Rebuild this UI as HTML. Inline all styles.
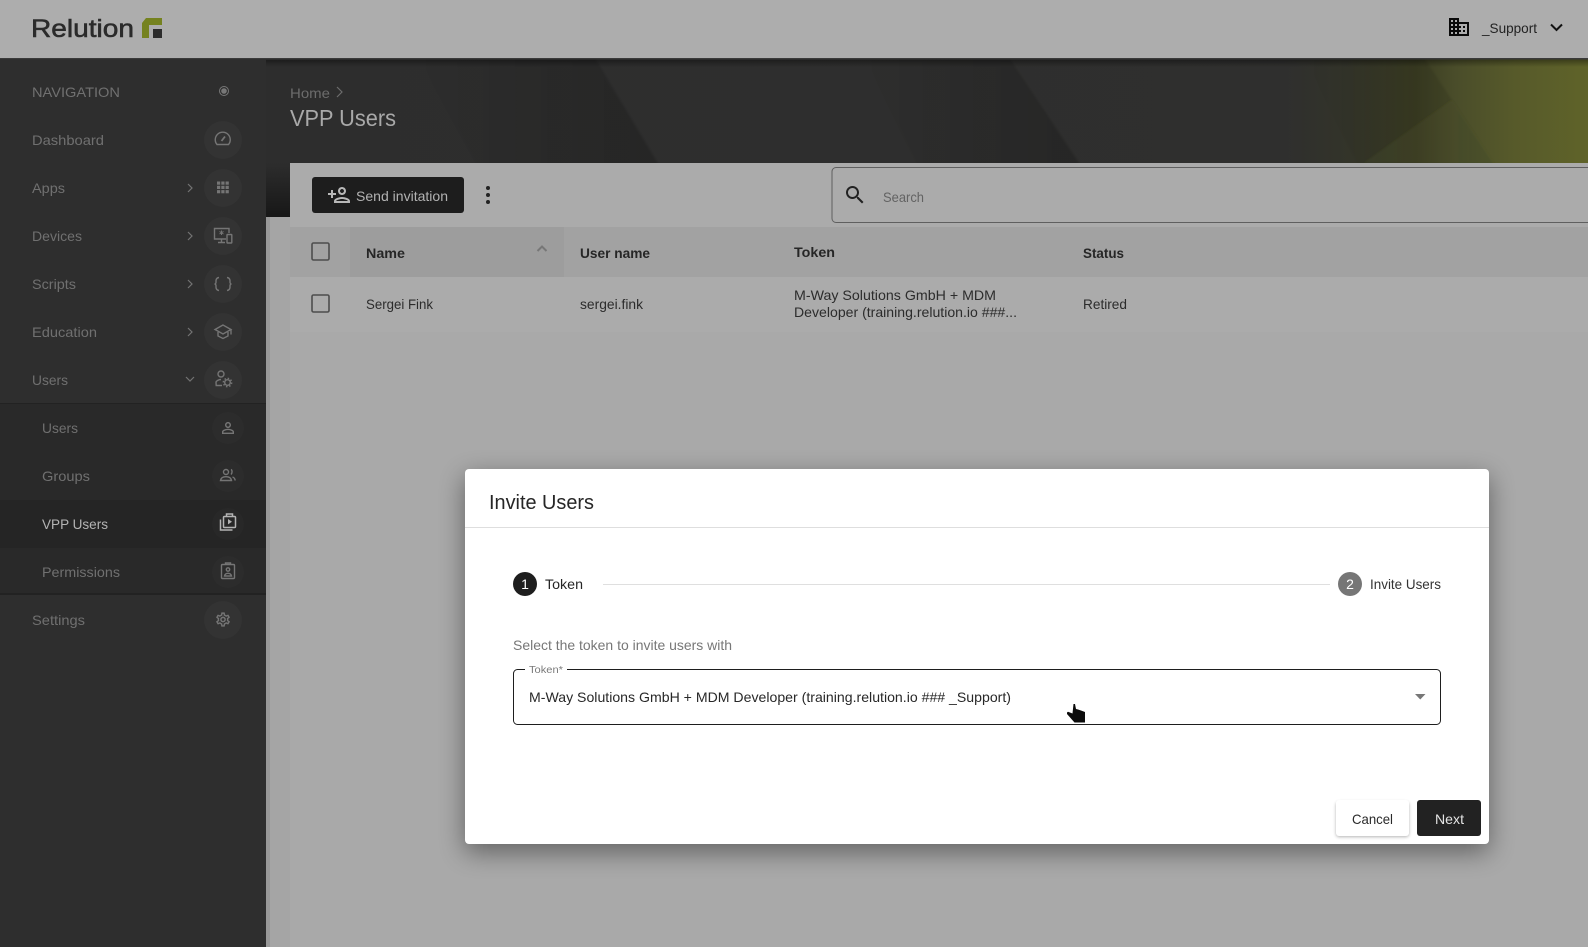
<!DOCTYPE html>
<html lang="en"><head><meta charset="utf-8"><title>VPP Users</title>
<style>
html,body{margin:0;padding:0;width:1588px;height:947px;overflow:hidden;background:#a9a9a9}
svg{display:block;position:absolute;left:0;top:0}
text{font-family:"Liberation Sans",sans-serif;font-size:14px}
.n{fill:#707070}
.s{fill:none;stroke:#757575;stroke-width:1.4}
.ic{fill:#757575}
.h{font-weight:bold;fill:#262626}
.d{fill:#2c2c2c}
</style></head><body>
<svg width="1588" height="947" viewBox="0 0 1588 947" xmlns="http://www.w3.org/2000/svg">
<defs>
<linearGradient id="bg" gradientUnits="userSpaceOnUse" x1="266" x2="1588" y1="0" y2="0">
<stop offset="0" stop-color="#2d2d2d"/><stop offset=".77" stop-color="#2f2f2e"/><stop offset=".82" stop-color="#333429"/><stop offset=".87" stop-color="#3a3c22"/><stop offset=".9" stop-color="#4a4d2a"/><stop offset=".945" stop-color="#575a2a"/><stop offset="1" stop-color="#5f6329"/>
</linearGradient>
<linearGradient id="w1" gradientUnits="userSpaceOnUse" x1="413" x2="640" y1="0" y2="0">
<stop offset="0" stop-color="#000" stop-opacity="0"/><stop offset="1" stop-color="#000" stop-opacity=".17"/>
</linearGradient>
<linearGradient id="w2" gradientUnits="userSpaceOnUse" x1="860" x2="1060" y1="0" y2="0">
<stop offset="0" stop-color="#000" stop-opacity="0"/><stop offset="1" stop-color="#000" stop-opacity=".17"/>
</linearGradient>
<linearGradient id="w3" gradientUnits="userSpaceOnUse" x1="1300" x2="1470" y1="0" y2="0">
<stop offset="0" stop-color="#000" stop-opacity="0"/><stop offset="1" stop-color="#000" stop-opacity=".12"/>
</linearGradient>
<linearGradient id="tp" x1="0" x2="0" y1="0" y2="1">
<stop offset="0" stop-color="#000" stop-opacity=".4"/><stop offset="1" stop-color="#000" stop-opacity="0"/>
</linearGradient>
<linearGradient id="st" x1="0" x2="0" y1="0" y2="1">
<stop offset="0" stop-color="#2d2d2d"/><stop offset="1" stop-color="#171717"/>
</linearGradient>
<filter id="sh" x="-10%" y="-20%" width="120%" height="140%"><feGaussianBlur stdDeviation="13"/></filter>
<filter id="sb" x="-20%" y="-40%" width="140%" height="180%"><feGaussianBlur stdDeviation="1.5"/></filter>
<filter id="wb" x="-5%" y="-5%" width="110%" height="110%"><feGaussianBlur stdDeviation="1"/></filter>
<clipPath id="bc"><rect x="266" y="59" width="1322" height="104"/></clipPath>
</defs>

<!-- page -->
<rect width="1588" height="947" fill="#a8a8a8"/>

<!-- banner -->
<rect x="266" y="59" width="1322" height="104" fill="url(#bg)"/>
<g clip-path="url(#bc)" filter="url(#wb)">
<polygon points="413,50 590,50 662,170 480,170" fill="url(#w1)"/>
<polygon points="860,50 1004,50 1084,170 920,170" fill="url(#w2)"/>
<polygon points="1300,50 1419,50 1498,170 1360,170" fill="url(#w3)"/>
<polygon points="1364,163 1452,100 1494,163" fill="#6d702f" opacity=".12"/>
</g>
<rect x="266" y="59" width="1322" height="8" fill="url(#tp)"/>
<rect x="266" y="163" width="24" height="54" fill="url(#st)"/>

<!-- panel -->
<rect x="290" y="163" width="1298" height="784" fill="#ababab"/>
<rect x="290" y="227" width="1298" height="50" fill="#a2a2a2"/>
<rect x="350" y="227" width="214" height="50" fill="#9d9d9d"/>
<rect x="290" y="277" width="1298" height="55" fill="#ababab"/>
<rect x="289" y="332" width="1299" height="615" fill="#a9a9a9"/>
<rect x="266" y="217" width="24" height="730" fill="#a5a5a5"/>
<rect x="266" y="217" width="4" height="730" fill="#000" opacity=".08"/>

<text x="290" y="98" fill="#6c6c6c" textLength="40" lengthAdjust="spacingAndGlyphs">Home</text>
<path d="M337 87l5 5-5 5" fill="none" stroke="#6c6c6c" stroke-width="1.2"/>
<text x="290" y="126" fill="#a9a9a9" style="font-size:23px" textLength="106" lengthAdjust="spacingAndGlyphs">VPP Users</text>

<!-- toolbar -->
<rect x="312" y="177" width="152" height="36" rx="3" fill="#1d1d1d"/>
<g transform="translate(327,183) scale(1)" fill="#b8b8b8"><path d="M15 12c2.21 0 4-1.79 4-4s-1.79-4-4-4-4 1.79-4 4 1.79 4 4 4zm0-6c1.1 0 2 .9 2 2s-.9 2-2 2-2-.9-2-2 .9-2 2-2zm0 8c-2.67 0-8 1.34-8 4v2h16v-2c0-2.66-5.33-4-8-4zm-6 4c.22-.72 3.31-2 6-2 2.7 0 5.8 1.29 6 2H9zm-3-3v-3h3v-2H6V7H4v3H1v2h3v3z"/></g>
<text x="356" y="201" fill="#b2b2b2" textLength="92" lengthAdjust="spacingAndGlyphs">Send invitation</text>
<circle cx="488" cy="188" r="2" fill="#222"/><circle cx="488" cy="195" r="2" fill="#222"/><circle cx="488" cy="202" r="2" fill="#222"/>
<path d="M1588 167.500H836a4 4 0 0 0-4 4v47a4 4 0 0 0 4 4H1588" fill="none" stroke="#5f5f5f" stroke-width="1"/>
<g transform="translate(843,183)" fill="#222"><path d="M15.500 14h-.79l-.28-.27C15.410 12.590 16 11.110 16 9.500 16 5.910 13.090 3 9.500 3S3 5.910 3 9.500 5.910 16 9.500 16c1.610 0 3.090-.59 4.230-1.570l.27.28v.79l5 4.990L20.490 19l-4.990-5zm-6 0C7.010 14 5 11.990 5 9.500S7.010 5 9.500 5 14 7.010 14 9.500 11.990 14 9.500 14z"/></g>
<text x="883" y="202" fill="#636363" textLength="41" lengthAdjust="spacingAndGlyphs">Search</text>

<!-- table -->
<rect x="312" y="243" width="17" height="17" rx="1.500" fill="none" stroke="#4d4d4d" stroke-width="1.600"/>
<rect x="312" y="295" width="17" height="17" rx="1.500" fill="none" stroke="#4d4d4d" stroke-width="1.600"/>
<text x="366" y="258" class="h" textLength="39" lengthAdjust="spacingAndGlyphs">Name</text>
<path d="M537.500 251l4.500-4.500 4.500 4.500" fill="none" stroke="#777" stroke-width="2"/>
<text x="580" y="258" class="h" textLength="70" lengthAdjust="spacingAndGlyphs">User name</text>
<text x="794" y="257" class="h" textLength="41" lengthAdjust="spacingAndGlyphs">Token</text>
<text x="1083" y="258" class="h" textLength="41" lengthAdjust="spacingAndGlyphs">Status</text>
<text x="366" y="309" class="d" textLength="67" lengthAdjust="spacingAndGlyphs">Sergei Fink</text>
<text x="580" y="309" class="d" textLength="63" lengthAdjust="spacingAndGlyphs">sergei.fink</text>
<text x="794" y="300" class="d" textLength="202" lengthAdjust="spacingAndGlyphs">M-Way Solutions GmbH + MDM</text>
<text x="794" y="317" class="d" textLength="223" lengthAdjust="spacingAndGlyphs">Developer (training.relution.io ###...</text>
<text x="1083" y="309" class="d" textLength="44" lengthAdjust="spacingAndGlyphs">Retired</text>

<!-- header -->
<rect width="1588" height="59" fill="#adadad"/>
<rect y="58" width="1588" height="1.500" fill="#3a3a3a"/>
<text x="31" y="37" fill="#2b2b2b" stroke="#2b2b2b" stroke-width=".55" style="font-size:25px" textLength="103" lengthAdjust="spacingAndGlyphs">Relution</text>
<path d="M142 38V23l4-5h16v7h-13v13z" fill="#75821f"/>
<rect x="153" y="29" width="9" height="9" fill="#2c2c2c"/>
<g transform="translate(1447,15)" fill="#0a0a0a"><path d="M12 7V3H2v18h20V7H12zM6 19H4v-2h2v2zm0-4H4v-2h2v2zm0-4H4V9h2v2zm0-4H4V5h2v2zm4 12H8v-2h2v2zm0-4H8v-2h2v2zm0-4H8V9h2v2zm0-4H8V5h2v2zm10 12h-8v-2h2v-2h-2v-2h2v-2h-2V9h8v10zm-2-8h-2v2h2v-2zm0 4h-2v2h2v-2z"/></g>
<text x="1482" y="33" fill="#222" textLength="55" lengthAdjust="spacingAndGlyphs">_Support</text>
<path d="M1551 24.500l5.500 5.500 5.500-5.500" fill="none" stroke="#111" stroke-width="2"/>

<!-- sidebar -->
<rect y="59" width="266" height="888" fill="#2e2e2e"/>
<rect y="403" width="266" height="191" fill="#292929"/>
<rect y="500" width="266" height="48" fill="#252525"/>
<rect y="403" width="266" height="1" fill="#222"/>
<rect y="593" width="266" height="2" fill="#222"/>

<text x="32" y="97" class="n" textLength="88" lengthAdjust="spacingAndGlyphs">NAVIGATION</text>
<circle cx="224" cy="91" r="4.500" fill="none" stroke="#777"/><circle cx="224" cy="91" r="2.800" fill="#777"/>

<g fill="#333">
<circle cx="223" cy="140" r="19"/><circle cx="223" cy="188" r="19"/><circle cx="223" cy="236" r="19"/><circle cx="223" cy="284" r="19"/><circle cx="223" cy="332" r="19"/><circle cx="223" cy="380" r="19"/><circle cx="223" cy="620" r="19"/>
</g>
<g fill="#2c2c2c">
<circle cx="228" cy="428" r="16"/><circle cx="228" cy="476" r="16"/><circle cx="228" cy="572" r="16"/>
</g>
<circle cx="228" cy="524" r="16" fill="#282828"/>

<text x="32" y="145" class="n" textLength="72" lengthAdjust="spacingAndGlyphs">Dashboard</text>
<text x="32" y="193" class="n" textLength="33" lengthAdjust="spacingAndGlyphs">Apps</text>
<text x="32" y="241" class="n" textLength="50" lengthAdjust="spacingAndGlyphs">Devices</text>
<text x="32" y="289" class="n" textLength="44" lengthAdjust="spacingAndGlyphs">Scripts</text>
<text x="32" y="337" class="n" textLength="65" lengthAdjust="spacingAndGlyphs">Education</text>
<text x="32" y="385" class="n" textLength="36" lengthAdjust="spacingAndGlyphs">Users</text>
<text x="42" y="433" class="n" textLength="36" lengthAdjust="spacingAndGlyphs">Users</text>
<text x="42" y="481" class="n" textLength="48" lengthAdjust="spacingAndGlyphs">Groups</text>
<text x="42" y="529" fill="#b4b4b4" textLength="66" lengthAdjust="spacingAndGlyphs">VPP Users</text>
<text x="42" y="577" class="n" textLength="78" lengthAdjust="spacingAndGlyphs">Permissions</text>
<text x="32" y="625" class="n" textLength="53" lengthAdjust="spacingAndGlyphs">Settings</text>

<g fill="none" stroke="#737373" stroke-width="1.200">
<path d="M188 184l4 4-4 4M188 232l4 4-4 4M188 280l4 4-4 4M188 328l4 4-4 4M186 377l4 4 4-4"/>
</g>

<!-- dashboard gauge -->
<g class="s"><path d="M217 144.500a7.500 7.500 0 1 1 11.500 0z"/><path d="M221.500 141l3.500-4.500" stroke-width="1.800"/></g>
<!-- apps -->
<g class="ic">
<rect x="217" y="181.500" width="3.200" height="3.200"/><rect x="221.300" y="181.500" width="3.200" height="3.200"/><rect x="225.600" y="181.500" width="3.200" height="3.200"/>
<rect x="217" y="185.800" width="3.200" height="3.200"/><rect x="221.300" y="185.800" width="3.200" height="3.200"/><rect x="225.600" y="185.800" width="3.200" height="3.200"/>
<rect x="217" y="190.100" width="3.200" height="3.200"/><rect x="221.300" y="190.100" width="3.200" height="3.200"/><rect x="225.600" y="190.100" width="3.200" height="3.200"/>
</g>
<!-- devices -->
<g class="s"><path d="M226 239h-11.500v-10.500h14.500v4.500"/><path d="M218 242.500h7M221.500 239v3.500"/><rect x="227" y="234.500" width="4.800" height="8.500" rx=".6"/></g>
<path d="M221.500 230.500v4.500M219.500 231.500l4 2.500M223.500 231.500l-4 2.500" stroke="#757575" stroke-width="1"/>
<!-- scripts -->
<g class="s"><path d="M219 277.500c-2 .3-2.800 1.200-3 3v2c-.2 1-.7 1.500-1.500 1.500.8 0 1.300.5 1.500 1.500v2c.2 1.800 1 2.700 3 3"/><path d="M227 277.500c2 .3 2.800 1.200 3 3v2c.2 1 .7 1.500 1.500 1.500-.8 0-1.300.5-1.500 1.500v2c-.2 1.800-1 2.700-3 3"/></g>
<!-- education -->
<g class="s"><path d="M223 325l-8 4.500 8 4.500 8-4.500z"/><path d="M218 332v4l5 2.500 5-2.500v-4"/><path d="M231 329.500v5"/></g>
<!-- users gear -->
<g class="s"><circle cx="221" cy="374" r="3"/><path d="M216 382.500c0-1.800 3-3 5-3"/><path d="M216 382.500l.2 3h5.800"/><circle cx="227.500" cy="382.500" r="2.800"/></g>
<circle cx="227.500" cy="382.500" r="4.200" fill="none" stroke="#757575" stroke-width="1.400" stroke-dasharray="1.500 1.800"/>
<!-- sub users -->
<g class="ic" transform="translate(219,419) scale(.75)"><path d="M12 5.900c1.160 0 2.100.94 2.100 2.100s-.94 2.100-2.100 2.100S9.900 9.160 9.900 8s.94-2.100 2.100-2.100m0 9c2.970 0 6.100 1.460 6.100 2.100v1.100H5.900V17c0-.64 3.130-2.100 6.100-2.100M12 4C9.790 4 8 5.790 8 8s1.790 4 4 4 4-1.790 4-4-1.790-4-4-4zm0 9c-2.670 0-8 1.340-8 4v3h16v-3c0-2.660-5.330-4-8-4z"/></g>
<!-- groups -->
<g class="s" stroke-width="1.300"><circle cx="226" cy="472" r="2.500"/><path d="M220.500 480.500c.5-3 3-3.800 5.500-3.800s5 .8 5.500 3.800z"/><path d="M231 469.500c1.300.5 1.500 3.500 0 5M232.500 477c1.500.5 2.500 2 2.700 3.500"/></g>
<!-- vpp -->
<g fill="none" stroke="#b4b4b4" stroke-width="1.500"><rect x="223.500" y="516.500" width="12" height="11" rx="1"/><path d="M226.500 516.500v-2.500h6v2.500"/><path d="M220.500 519.500v10.500h12"/></g>
<path d="M228 519l4 2.700-4 2.700z" fill="#b4b4b4"/>
<!-- permissions -->
<g class="s" stroke-width="1.400"><rect x="221.500" y="564.500" width="13" height="14" rx="1"/><path d="M225.500 564.500v-1.500h5v1.500"/><circle cx="228" cy="569.500" r="1.700"/><path d="M224.500 576c.4-2 2-2.700 3.500-2.700s3.100.7 3.500 2.700z"/></g>
<!-- settings -->
<g class="ic" transform="translate(214.500,611) scale(.71)"><path d="M19.430 12.980c.04-.32.07-.64.07-.98 0-.34-.03-.66-.07-.98l2.110-1.650c.19-.15.24-.42.12-.64l-2-3.460c-.09-.16-.26-.25-.44-.25-.06 0-.12.01-.17.03l-2.490 1c-.52-.4-1.080-.73-1.690-.98l-.38-2.650C14.460 2.180 14.250 2 14 2h-4c-.25 0-.46.18-.49.42l-.38 2.650c-.61.25-1.170.59-1.690.98l-2.490-1c-.06-.02-.12-.03-.18-.03-.17 0-.34.09-.43.25l-2 3.460c-.13.22-.07.49.12.64l2.110 1.650c-.04.32-.07.65-.07.98 0 .33.03.66.07.98l-2.110 1.650c-.19.15-.24.42-.12.64l2 3.460c.09.16.26.25.44.25.06 0 .12-.01.17-.03l2.490-1c.52.4 1.080.73 1.690.98l.38 2.650c.03.24.24.42.49.42h4c.25 0 .46-.18.49-.42l.38-2.650c.61-.25 1.170-.59 1.690-.98l2.490 1c.06.02.12.03.18.03.17 0 .34-.09.43-.25l2-3.460c.12-.22.07-.49-.12-.64l-2.110-1.650zm-1.980-1.710c.04.31.05.52.05.73 0 .21-.02.43-.05.73l-.14 1.130.89.7 1.080.84-.7 1.210-1.270-.51-1.040-.42-.9.68c-.43.32-.84.56-1.250.73l-1.060.43-.16 1.130-.2 1.350h-1.400l-.19-1.350-.16-1.130-1.060-.43c-.43-.18-.83-.41-1.230-.71l-.91-.7-1.060.43-1.270.51-.7-1.210 1.080-.84.89-.7-.14-1.130c-.03-.31-.05-.54-.05-.74s.02-.43.05-.73l.14-1.130-.89-.7-1.080-.84.7-1.210 1.270.51 1.040.42.9-.68c.43-.32.84-.56 1.250-.73l1.060-.43.16-1.130.2-1.350h1.390l.19 1.350.16 1.130 1.060.43c.43.18.83.41 1.230.71l.91.7 1.060-.43 1.270-.51.7 1.210-1.070.85-.89.7.14 1.130zM12 8c-2.210 0-4 1.790-4 4s1.790 4 4 4 4-1.790 4-4-1.790-4-4-4zm0 6c-1.100 0-2-.9-2-2s.9-2 2-2 2 .9 2 2-.9 2-2 2z"/></g>

<!-- dialog -->
<rect x="465" y="477" width="1024" height="375" fill="#000" opacity=".42" filter="url(#sh)"/>
<rect x="465" y="469" width="1024" height="375" rx="4" fill="#fff"/>
<rect x="465" y="527" width="1024" height="1" fill="#dedede"/>
<text x="489" y="509" fill="#262626" style="font-size:20px" textLength="105" lengthAdjust="spacingAndGlyphs">Invite Users</text>

<circle cx="525" cy="584" r="12" fill="#1e1e1e"/>
<text x="525" y="589" fill="#fff" text-anchor="middle">1</text>
<text x="545" y="589" fill="#262626" textLength="38" lengthAdjust="spacingAndGlyphs">Token</text>
<rect x="603" y="584" width="727" height="1" fill="#dfdfdf"/>
<circle cx="1350" cy="584" r="12" fill="#767676"/>
<text x="1350" y="589" fill="#fff" text-anchor="middle">2</text>
<text x="1370" y="589" fill="#333" textLength="71" lengthAdjust="spacingAndGlyphs">Invite Users</text>

<text x="513" y="650" fill="#777" textLength="219" lengthAdjust="spacingAndGlyphs">Select the token to invite users with</text>

<path d="M525 669.500H517.500a4 4 0 0 0-4 4V720.500a4 4 0 0 0 4 4H1436.500a4 4 0 0 0 4-4V673.500a4 4 0 0 0-4-4H567" fill="none" stroke="#1e1e1e" stroke-width="1"/>
<text x="529" y="673" fill="#7a7a7a" style="font-size:10.500px" textLength="34" lengthAdjust="spacingAndGlyphs">Token*</text>
<text x="529" y="702" fill="#282828" textLength="482" lengthAdjust="spacingAndGlyphs">M-Way Solutions GmbH + MDM Developer (training.relution.io ### _Support)</text>
<path d="M1415 694h10.500l-5.250 5.500z" fill="#777"/>

<!-- cursor -->
<path d="M1073.500 704h1.500l1 5 2 .5 3 1 4 1.500v10.500h-10.500l-7.500-8.500v-1.500l1-.7 4.500 1.700z" fill="#0b0b0b"/>

<!-- buttons -->
<rect x="1336" y="802" width="73" height="35" rx="3" fill="#000" opacity=".3" filter="url(#sb)"/>
<rect x="1336" y="800" width="73" height="36" rx="3" fill="#fff"/>
<text x="1352" y="824" fill="#2a2a2a" textLength="41" lengthAdjust="spacingAndGlyphs">Cancel</text>
<rect x="1417" y="800" width="64" height="36" rx="3" fill="#222"/>
<text x="1435" y="824" fill="#e4e4e4" textLength="29" lengthAdjust="spacingAndGlyphs">Next</text>
</svg>
</body></html>
